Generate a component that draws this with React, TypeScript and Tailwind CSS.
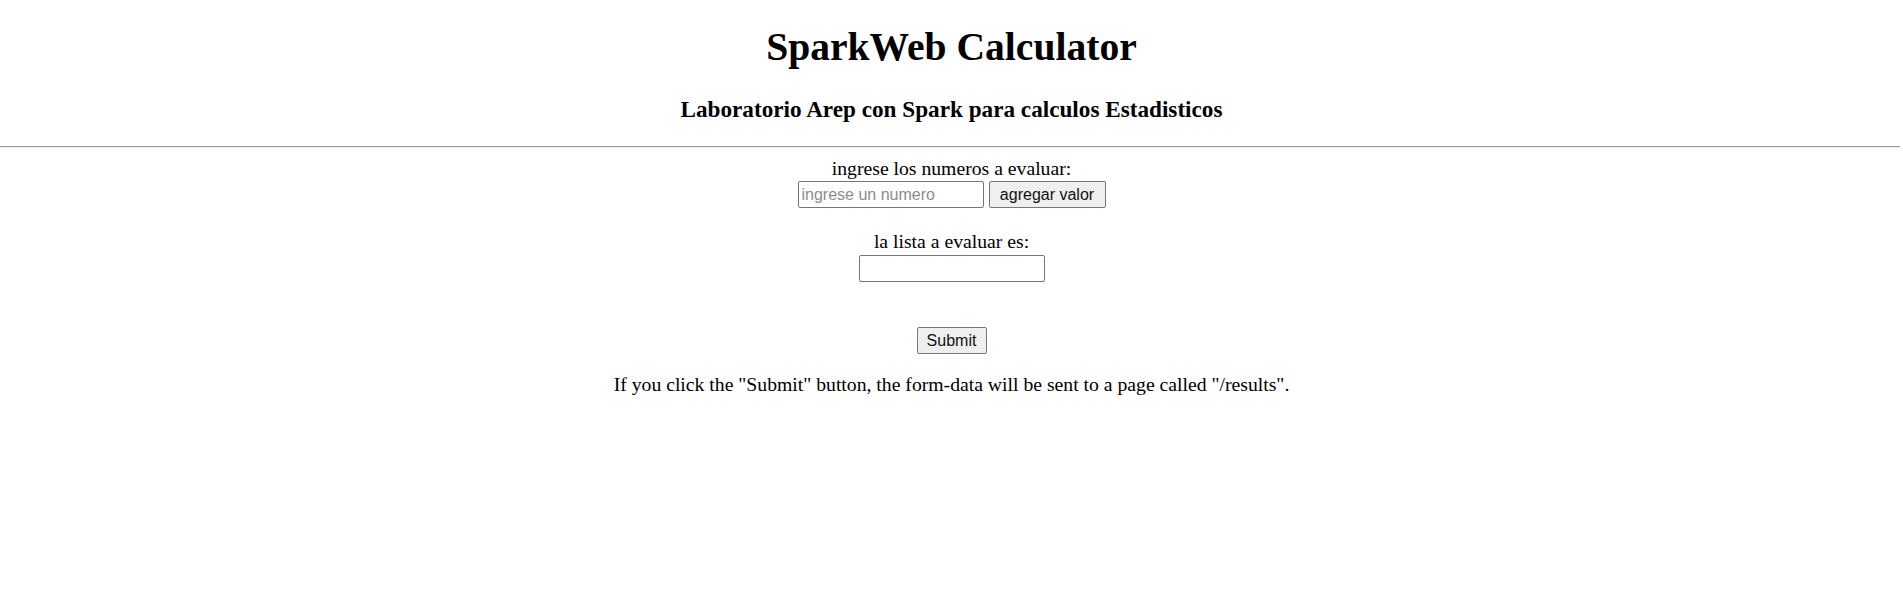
export default function App() {
  return (
    <div className="w-[1903px] h-[605px] bg-white text-black font-['Liberation_Serif',serif] flex flex-col overflow-hidden">
      <h1 className="mt-[25px] text-center text-[39.6px] leading-[44px] font-bold">SparkWeb Calculator</h1>
      <h3 className="mt-[27px] text-center text-[23.2px] leading-[26px] font-bold">
        Laboratorio Arep con Spark para calculos Estadisticos
      </h3>
      <div className="mt-[24px] w-[1900px] flex flex-col">
        <div className="h-px bg-[#9a9a9a]" />
        <div className="h-px bg-[#ececec]" />
      </div>
      <form className="flex flex-col items-center" onSubmit={(e) => e.preventDefault()}>
        <div className="mt-[9px] text-[19.7px] leading-[22px]">ingrese los numeros a evaluar:</div>
        <div className="mt-[2px] flex items-center gap-[5px] font-['Liberation_Sans',Arial,sans-serif]">
          <input
            type="text"
            placeholder="ingrese un numero"
            className="w-[186px] h-[27px] px-[3px] border border-[#767676] rounded-[2px] bg-white text-[16px] text-black placeholder:text-[#8c8c8c] outline-none"
          />
          <button
            type="button"
            className="w-[117px] h-[27px] border border-[#767676] rounded-[2px] bg-[#efefef] text-[16px] text-[#111]"
          >
            agregar valor
          </button>
        </div>
        <div className="mt-[22px] text-[19.7px] leading-[22px]">la lista a evaluar es:</div>
        <input
          type="text"
          className="mt-[3px] w-[186px] h-[27px] px-[3px] border border-[#767676] rounded-[2px] bg-white text-[16px] outline-none font-['Liberation_Sans',Arial,sans-serif]"
        />
        <button
          type="submit"
          className="mt-[45px] w-[70px] h-[27px] border border-[#767676] rounded-[2px] bg-[#efefef] text-[16px] text-[#111] font-['Liberation_Sans',Arial,sans-serif]"
        >
          Submit
        </button>
      </form>
      <p className="mt-[19px] text-center text-[19.7px] leading-[22px]">
        If you click the "Submit" button, the form-data will be sent to a page called "/results".
      </p>
    </div>
  );
}
